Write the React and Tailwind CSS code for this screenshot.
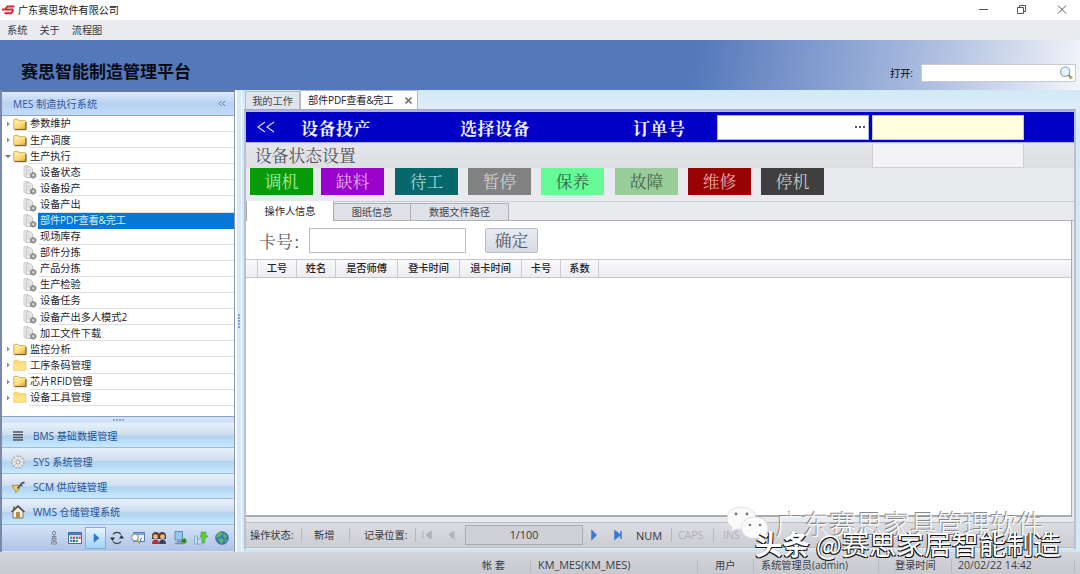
import React from "react";

const SANS = "font-['Open_Sans','Noto_Sans_CJK_SC',sans-serif]";
const SONG = "font-['Noto_Serif_CJK_SC','Noto_Sans_CJK_SC',serif]";

function Folder({ open }) {
  return (
    <svg width="14" height="13" viewBox="0 0 14 13" className="shrink-0">
      <defs>
        <linearGradient id="fold" x1="0" y1="0" x2="1" y2="1">
          <stop offset="0" stopColor="#fff3b4" />
          <stop offset=".55" stopColor="#fbdc7c" />
          <stop offset="1" stopColor="#dfa52e" />
        </linearGradient>
      </defs>
      <path d="M.8 11.2V2.2q0-.9.9-.9h3.2l1.2 1.4h5.9q.9 0 .9.9v7.6z" fill={open ? "url(#fold)" : "#ffdc78"} stroke={open ? "#c09a45" : "#ecc75f"} strokeWidth=".8" />
      {open ? <path d="M6 5.2 7.6 4h4.8" stroke="#f9e9a8" strokeWidth="1" fill="none" /> : <path d="M1.3 5h11v5.8h-11z" fill="#ffe488" />}
      {open && <path d="M13 4v7.7H1.8" stroke="#6b542a" strokeWidth="1" fill="none" />}
    </svg>
  );
}

function Doc() {
  return (
    <svg width="14" height="14" viewBox="0 0 14 14" className="shrink-0">
      <path d="M1 .8h4.5l1.5 1.5v9H1z" fill="#eee" stroke="#c4c4c4" strokeWidth=".8" />
      <path d="M3.3 1.8h4l2.2 2.2v8.5H3.3z" fill="#ececec" stroke="#b4b4b4" strokeWidth=".8" />
      <path d="M4.8 5h3.2M4.8 7h3M4.8 9h2" stroke="#c3c3c3" strokeWidth=".8" />
      <path d="m10.2 7.4 2.6 1.4v3l-2.6 1.5-2.6-1.5v-3z" fill="#9b9b9b" stroke="#777" strokeWidth=".8" />
      <circle cx="10.2" cy="10.3" r="1" fill="#e8e8e8" />
    </svg>
  );
}

const tree = [
  ["参数维护", 0, true], ["生产调度", 0, true], ["生产执行", 0, true, true],
  ["设备状态", 1], ["设备投产", 1], ["设备产出", 1], ["部件PDF查看&完工", 1, false, false, true],
  ["现场库存", 1], ["部件分拣", 1], ["产品分拣", 1], ["生产检验", 1], ["设备任务", 1],
  ["设备产出多人模式2", 1], ["加工文件下载", 1],
  ["监控分析", 0, true], ["工序条码管理", 0, false], ["芯片RFID管理", 0, true], ["设备工具管理", 0, false],
];

function TreeRow({ item }) {
  const [label, level, open, expanded, selected] = item;
  return (
    <div className="flex h-[16.1px] shrink-0 items-center">
      {level === 0 ? (
        <>
          <svg width="10" height="8" viewBox="0 0 10 8" className="shrink-0">
            {expanded ? <path d="M2 3h6L5 6z" fill="#777" /> : <path d="M4 1.5 6.6 4 4 6.5z" fill="#888" />}
          </svg>
          <Folder open={open} />
          <span className="ml-[2px] flex h-full flex-1 items-center whitespace-nowrap border-b border-[#dedfe1] pl-px text-[10.2px] text-[#25252d]">{label}</span>
        </>
      ) : (
        <>
          <span className="ml-[20px] flex"><Doc /></span>
          <span className={"ml-[1px] flex h-full flex-1 items-center whitespace-nowrap border-b pl-[2px] text-[10.2px] " + (selected ? "border-[#0877d4] bg-[#0877d4] tracking-[-0.15px] text-[#d6efff]" : "border-[#dedfe1] text-[#25252d]")}>{label}</span>
        </>
      )}
    </div>
  );
}

function NavIcon({ kind }) {
  return (
    <svg width="16" height="16" viewBox="0 0 16 16" className="shrink-0">
      {kind === 0 && <path d="M3 4h10M3 6.7h10M3 9.4h10M3 12h10" stroke="#51565e" strokeWidth="1.5" />}
      {kind === 1 && (
        <g fill="none" stroke="#a9a9a9">
          <circle cx="8" cy="8" r="6" fill="#eee" strokeDasharray="2.2 1" strokeWidth="1.2" />
          <circle cx="8" cy="8" r="2" />
          <path d="M8 2.5V6M8 10v3.5M2.5 8H6M10 8h3.5M4 4l2.5 2.5M9.5 9.5 12 12M12 4 9.5 6.5M6.5 9.5 4 12" strokeWidth=".7" />
        </g>
      )}
      {kind === 2 && (
        <g>
          <path d="M2 6.5 8.5 6l1 3.5L6 13.5l-1.5-3z" fill="#edcb72" stroke="#a77f35" strokeWidth=".8" />
          <path d="m7.5 9.5 4.5-5.5 2.5-.5M10.5 6l2 1" stroke="#565656" strokeWidth="1.8" fill="none" />
        </g>
      )}
      {kind === 3 && (
        <g>
          <path d="M3 7.4 8 3l5 4.4V14H3z" fill="#f3edda" stroke="#635c53" strokeWidth=".8" />
          <path d="M1.5 8 8 2l6.5 6" fill="none" stroke="#504b47" strokeWidth="1.5" />
          <path d="M6 8h4v6H6z" fill="#b58c4c" />
          <path d="M4 2.5v3" stroke="#635c53" strokeWidth="1.5" />
        </g>
      )}
    </svg>
  );
}

function ToolIcon({ kind }) {
  return (
    <svg width="16" height="16" viewBox="0 0 16 16">
      {kind === 0 && <g fill="#d5dbe7" stroke="#717c8e" strokeWidth=".9"><circle cx="8" cy="3" r="1.7" /><path d="M8 5v4M5.5 6.5h5" /><path d="M6 8.2h4v2H6zM5.5 12h5v2h-5zM8 10v2" /></g>}
      {kind === 1 && <g><path d="M1.5 2.5h13v11h-13z" fill="#fff" stroke="#426ba7" /><path d="M2 3h12v2.3H2z" fill="#4a7bbc" /><path d="M3 6.5h2.5V9H3zM9 9.7h2.2v2.4H9z" fill="#47a46a" /><path d="M6 6.5h2.3V9H6zM11.7 6.5h2V9h-2z" fill="#d34e55" /><path d="M9 6.5h2.2V9H9zM3 9.7h2.5v2.4H3z" fill="#547dd4" /><path d="M6 9.7h2.3v2.4H6z" fill="#594dae" /></g>}
      {kind === 2 && <path d="m6 3.8 5 4.2-5 4.2z" fill="#267bdb" stroke="#1b62b3" strokeWidth=".5" />}
      {kind === 3 && <g><path d="M4 4.3a5.2 5.2 0 0 1 8 0M12 11.7a5.2 5.2 0 0 1-8 0" fill="none" stroke="#36414b" strokeWidth="1.3" /><path d="M1 7.5h5L3.5 11zM10 8.5h5L12.500 5z" fill="#28323b" /></g>}
      {kind === 4 && <g><path d="M3.5 2.5h11v9h-11z" fill="#e8f3ff" stroke="#547db4" /><path d="M4 3h10v2H4z" fill="#7ca6d9" /><circle cx="5" cy="7.5" r="3.3" fill="#eff7ff" stroke="#999f9f" strokeWidth="1.2" /><path d="m7 10 3 3.5" stroke="#bda24d" strokeWidth="2" /><path d="m12 8-2 2 2 2" stroke="#4d80bd" fill="none" /></g>}
      {kind === 5 && <g><path d="M1 6q0-4 4-4 3 0 3 3 0-3 3-3 4 0 4 4v3H1z" fill="#5b3b29" /><circle cx="4.5" cy="6.7" r="2.4" fill="#eabb91" /><circle cx="11.5" cy="6.7" r="2.4" fill="#eabb91" /><path d="M1 14q0-4.500 3.500-4.500T8 14z" fill="#a9343f" /><path d="M8 14q0-4.500 3.500-4.500T15 14z" fill="#3b4164" /></g>}
      {kind === 6 && <g><path d="M3 1.500h7.500v8.500H3z" fill="#8fc8f2" stroke="#4c7ba3" strokeWidth=".8" /><path d="M5 11.500h5M3 13.500h8" stroke="#70899f" strokeWidth="1.500" /><circle cx="12" cy="11" r="2.800" fill="#50a54c" /><path d="M13 8.500v5L9.500 11z" fill="#267a2b" /></g>}
      {kind === 7 && <g><path d="M1.500 6h3v8h-3zM4.500 9h4v5h-4z" fill="#c5dcf3" stroke="#6d9ecb" strokeWidth=".7" /><path d="M8 2h5v4h2l-3.200 3.200V13H9.500V9.200L7 6h1z" fill="#64c83b" stroke="#48a334" strokeWidth=".6" /></g>}
      {kind === 8 && <g><circle cx="8" cy="8" r="6.300" fill="#347dc2" stroke="#245583" strokeWidth=".7" /><path d="m3 4 3-2 3 1-2 3-2 1-3 1zm7-1 3 3-2 3-2-3zM4 9l4-1 2 3-3 3zm7 1 3-1-3 4z" fill="#62b461" /></g>}
    </svg>
  );
}

const states = [
  ["调机", "bg-[#079c07] text-[#b5e9a7] ml-0"], ["缺料", "bg-[#9903cb] text-[#e3afed] ml-[8px]"],
  ["待工", "bg-[#06686a] text-[#a9dcdc] ml-[11px]"], ["暂停", "bg-[#828283] text-[#cfcfcf] ml-[10px]"],
  ["保养", "bg-[#65fc98] text-[#32684b] ml-[10px]"], ["故障", "bg-[#99cd9a] text-[#48664c] ml-[11px]"],
  ["维修", "bg-[#980203] text-[#eba8a8] ml-[10px]"], ["停机", "bg-[#3f3f40] text-[#c8c8c8] ml-[10px]"],
];

function Sep({ className }) {
  return <i className={"h-[14px] w-px shrink-0 bg-[#b6b9c0] " + className} />;
}

function Sidebar() {
  return (
    <aside className="flex w-[235px] shrink-0 flex-col border-l-2 border-[#7989aa] border-r border-r-[#8598bc] bg-[#d4e4f7]">
      <div className="h-[2px] shrink-0 bg-[#6679a2]" />
      <div className="flex h-[23px] shrink-0 items-center justify-between bg-linear-to-b from-[#dceafe] via-[#b8d1f2] to-[#c3dcf8] pl-[11px] pr-[8px] pt-px text-[10.2px] text-[#2f58a3]">
        <span>MES 制造执行系统</span>
        <svg width="8" height="8" viewBox="0 0 8 8" fill="none" stroke="#5577b9"><path d="M3.500 1 1 3.500 3.500 6M7 1 4.500 3.500 7 6" /></svg>
      </div>
      <div className="flex h-[302px] shrink-0 flex-col border-y border-[#8ba2c7] bg-white pl-[1px]">
        {tree.map((item) => <TreeRow key={item[0]} item={item} />)}
      </div>
      <div className="flex h-[6px] shrink-0 items-center justify-center gap-[1px] bg-[#d1e3f8]">
        {[0, 1, 2, 3].map((n) => <i key={n} className="size-[2px] bg-[#91a9cd]" />)}
      </div>
      {["BMS 基础数据管理", "SYS 系统管理", "SCM 供应链管理", "WMS 仓储管理系统"].map((label, i) => (
        <div key={label} className="flex h-[25.4px] shrink-0 items-center border-b border-[#9ebad8] bg-[linear-gradient(180deg,#e8f1fc_0%,#cfdeef_48%,#b2d3ef_56%,#c6eaff_100%)] pl-[8px] pt-[2px] text-[10.1px] text-[#24519a]">
          <NavIcon kind={i} /><span className="ml-[7px] whitespace-nowrap">{label}</span>
        </div>
      ))}
      <div className="flex h-[26px] shrink-0 items-center bg-linear-to-b from-[#d4e3f7] to-[#aec3e5] pl-[41px]">
        {[0, 1, 2, 3, 4, 5, 6, 7, 8].map((k) => (
          <span key={k} className={"flex h-[22px] w-[21.1px] shrink-0 items-center justify-center " + (k === 2 ? "border border-[#84abd9] bg-linear-to-b from-[#e6f3ff] to-[#a1d1fa]" : "")}><ToolIcon kind={k} /></span>
        ))}
      </div>
    </aside>
  );
}

function Workspace() {
  return (
    <section className="flex min-w-0 flex-1 flex-col bg-[linear-gradient(180deg,#cfeaf5_0px,#e2edf7_20px,#d4e8f6_40px)] pl-[2px] pr-[4px]">
      <div className="flex h-[20px] shrink-0 items-end border-b border-[#a1a8bd] pl-px text-[10.2px] text-[#444952]">
        <span className="flex h-[18px] w-[55px] items-center justify-center border border-b-0 border-[#b3bac8] bg-[#dfe4ed] pt-px">我的工作</span>
        <span className="flex h-[19px] w-[118px] items-center whitespace-nowrap border border-b-0 border-[#b3bac8] bg-white pl-[7px] pt-px tracking-[-0.2px] text-[#22242d]">部件PDF查看&amp;完工
          <svg width="9" height="9" viewBox="0 0 9 9" className="ml-auto mr-[4px]"><path d="m1.5 1.5 6 6m0-6-6 6" stroke="#666" strokeWidth="1.5" /></svg>
        </span>
      </div>
      <div className="flex min-h-0 flex-1 flex-col border-x-2 border-[#bac0d0] bg-[#e9eaee]">
        <div className={"flex h-[33px] shrink-0 items-center border-b border-t-2 border-b-[#aeb1ec] border-t-[#b0b4dc] bg-[#0000c7] text-[17px] font-bold text-[#f0f2ff] " + SONG}>
          <svg width="20" height="14" viewBox="0 0 20 14" className="ml-[10px]"><path d="M9 2 2 7l7 5m9-10-7 5 7 5" stroke="#dce0ff" strokeWidth="1.2" fill="none" /></svg>
          <span className="ml-[25px] w-[159px] whitespace-nowrap tracking-[.5px]">设备投产</span>
          <span className="w-[173px] whitespace-nowrap tracking-[.5px]">选择设备</span>
          <span className="w-[84px] whitespace-nowrap tracking-[.5px]">订单号</span>
          <span className="flex h-[25px] w-[152px] items-center justify-end gap-[2px] border border-[#aeb1db] bg-white pr-[3px]">
            {[0, 1, 2].map((n) => <i key={n} className="size-[2px] bg-[#555]" />)}
          </span>
          <span className="ml-[3px] h-[25px] w-[152px] border border-[#c9caa8] bg-[#ffffdf]" />
        </div>
        <div className="flex h-[25px] shrink-0 items-center justify-between bg-linear-to-b from-[#e5e6ea] to-[#dedfe2] pl-[9px] pr-[50px]">
          <span className={"text-[16.8px] leading-none text-[#4e5159] " + SONG}>设备状态设置</span>
          <span className="h-[24px] w-[152px] border border-t-0 border-[#cfd0d5] bg-[#f3f3f7]" />
        </div>
        <div className={"flex h-[27px] shrink-0 pl-[4px] " + SONG}>
          {states.map(([label, style]) => <span key={label} className={"flex w-[63px] items-center justify-center text-[16.8px] " + style}>{label}</span>)}
        </div>
        <div className="mt-[6px] flex h-[20px] shrink-0 items-end border-t border-[#cbcdd2] text-[10.2px] text-[#43464e]">
          <span className="flex h-[20px] w-[88px] items-center justify-center border-x border-[#a9acb4] bg-white text-[#22242d]">操作人信息</span>
          <span className="flex h-[18px] w-[77px] items-center justify-center border border-l-0 border-[#aeb1b9] bg-[#dfe1e6]">图纸信息</span>
          <span className="flex h-[18px] w-[98px] items-center justify-center border border-l-0 border-[#aeb1b9] bg-[#dfe1e6]">数据文件路径</span>
          <i className="h-px flex-1 bg-[#aeb1b9]" />
        </div>
        <div className="mr-[2px] flex h-[296px] shrink-0 flex-col border-b-2 border-r border-[#a8abb1] bg-white">
          <div className={"flex h-[38px] shrink-0 items-center pl-[13px] text-[17px] text-[#575b65] " + SONG}>
            <span className="w-[50px] whitespace-nowrap">卡号<span className="ml-[1px]">:</span></span>
            <span className="h-[25px] w-[157px] border border-[#bdbfc6] bg-white" />
            <span className="ml-[19px] flex h-[25px] w-[53px] items-center justify-center rounded-xs border border-[#b5bbc8] bg-linear-to-b from-[#e9ebf3] to-[#d7dbe6] text-[16.8px]">确定</span>
          </div>
          <div className="flex h-[19px] shrink-0 border-y border-[#c5c7cc] bg-linear-to-b from-[#f9f9fb] to-[#ededf1] text-[10.2px] font-medium text-[#202229]">
            <span className="w-[12px] border-r border-[#c9cbd0]" />
            <span className="flex w-[39px] items-center justify-center border-r border-[#c9cbd0]">工号</span>
            <span className="flex w-[39px] items-center justify-center border-r border-[#c9cbd0]">姓名</span>
            <span className="flex w-[62px] items-center justify-center border-r border-[#c9cbd0]">是否师傅</span>
            <span className="flex w-[62px] items-center justify-center border-r border-[#c9cbd0]">登卡时间</span>
            <span className="flex w-[62px] items-center justify-center border-r border-[#c9cbd0]">退卡时间</span>
            <span className="flex w-[39px] items-center justify-center border-r border-[#c9cbd0]">卡号</span>
            <span className="flex w-[38px] items-center justify-center border-r border-[#c9cbd0]">系数</span>
          </div>
        </div>
        <div className="mt-[5px] flex h-[26px] shrink-0 items-center border-b border-t border-[#b9bbc1] bg-linear-to-b from-[#dcdde2] to-[#cbcdd3] pl-[4px] text-[10.2px] text-[#34363d]">
          <span className="w-[51px] whitespace-nowrap">操作状态:</span><Sep className="" />
          <span className="ml-[12px] w-[35px]">新增</span><Sep className="" />
          <span className="ml-[14px] w-[51px] whitespace-nowrap">记录位置:</span><Sep className="" />
          <svg width="49" height="12" viewBox="0 0 49 12" className="shrink-0"><path d="M7 2v8M15 2v8M15 2l-5 4 5 4zM38 2l-5 4 5 4z" fill="#aeb2b9" stroke="#aeb2b9" /></svg>
          <span className="flex h-[20px] w-[118px] items-center justify-center border border-[#a8abb2] bg-[#cfd1d6] text-[10.800px]">1/100</span>
          <svg width="53" height="12" viewBox="0 0 53 12" className="shrink-0"><path d="m9 2 4 4-4 4zM32 2l5 4-5 4zM38 2v8" fill="#3979da" stroke="#3979da" strokeWidth="1.5" /></svg>
          <span className="w-[35px] text-[11px] font-medium">NUM</span><Sep className="" />
          <span className="ml-[6px] w-[35px] text-[10.5px] text-[#aeb1b8]">CAPS</span><Sep className="" />
          <span className="ml-[9px] text-[10.5px] text-[#aeb1b8]">INS</span>
        </div>
      </div>
      <div className="h-[3px] bg-[#cfe3f1]" />
    </section>
  );
}

function Watermark() {
  return (
    <div className="pointer-events-none absolute inset-0 z-20">
      <svg width="46" height="38" viewBox="0 0 46 38" className="absolute left-[725px] top-[505px]">
        <g fill="#fbfbfb" stroke="#c9c9c9" strokeWidth=".6">
          <path d="M16 2C8 2 2 7 2 13c0 5 2 7 5 9l-1 5 5-3c11 2 20-3 20-10C31 7 25 2 16 2z" />
          <path d="M30 12c-8 0-14 5-14 11s7 12 17 10l5 3-1-4c3-2 6-5 6-9 0-6-5-11-13-11z" />
        </g>
        <g fill="#777"><circle cx="11" cy="9" r="1.400" /><circle cx="22" cy="9" r="1.400" /><circle cx="25" cy="20" r="1.300" /><circle cx="35" cy="20" r="1.300" /></g>
      </svg>
      <span className="absolute left-[776px] top-[511px] whitespace-nowrap text-[26.800px] font-light leading-[28px] text-[#fafafa] [text-shadow:-1px_-1px_0_#888]">广东赛思家具管理软件</span>
      <span className="absolute left-[755px] top-[529px] whitespace-nowrap text-[27.400px] leading-[28px] text-white [text-shadow:-1px_1px_0_#111,1px_1px_0_#111]"><b>头条</b><span className="ml-[6px] font-['Noto_Sans_CJK_SC',sans-serif]">@</span>赛思家居智能制造</span>
    </div>
  );
}

export default function App() {
  return (
    <main className={"relative flex h-[574px] w-[1080px] flex-col overflow-hidden bg-[#d4e8f6] leading-none " + SANS}>
      <header className="flex h-[20px] shrink-0 items-center bg-white text-[10.1px] text-[#202020]">
        <svg width="14" height="10" viewBox="0 0 14 10" className="ml-px"><path d="M6 1.500h7.500M1 4.500h11M3.500 8.200h7.500" stroke="#d92435" strokeWidth="2" /><path d="M6 1.500 4.500 4.500M12 4.500l-1 3.500" stroke="#d92435" strokeWidth="2" /></svg>
        <span className="ml-[3px]">广东赛思软件有限公司</span>
        <svg width="94" height="16" viewBox="0 0 94 16" className="ml-auto mr-[12px]" fill="none" stroke="#555"><path d="M5 7.500h9M43.500 5.500h6v6h-6zM45.500 5.500v-2h6v6h-2M84 3.500l8 8M92 3.500l-8 8" /></svg>
      </header>
      <nav className="flex h-[20px] shrink-0 items-center gap-[12px] bg-[#e9ebee] pl-[7px] text-[10.2px] text-[#353845]"><span>系统</span><span>关于</span><span>流程图</span></nav>
      <div className="flex h-[50px] shrink-0 items-center justify-between bg-[linear-gradient(100deg,#5578ba_0%,#5578ba_64%,#8ca4d3_78%,#adbee0_86%,#d4dcee_94%,#f3f5fb_100%)] pl-[21px] pr-[4px]">
        <h1 className="mt-[13px] text-[17px] font-bold text-[#070b14]">赛思智能制造管理平台</h1>
        <div className="mt-[16px] flex items-center text-[10.2px] font-medium text-[#20283a]">
          <span className="w-[31px] whitespace-nowrap">打开:</span>
          <span className="flex h-[18px] w-[155px] items-center justify-end border border-[#c5cbd5] bg-white pr-[2px]">
            <svg width="14" height="14" viewBox="0 0 14 14"><circle cx="6.200" cy="5.700" r="4.600" fill="#e5f3ff" stroke="#9aaab8" strokeWidth="1.300" /><path d="m9.500 9 1.500 1.500" stroke="#777" strokeWidth="2" /><circle cx="11.800" cy="11.500" r="1.800" fill="#c6a45f" /></svg>
          </span>
        </div>
      </div>
      <div className="flex h-[462px] shrink-0">
        <Sidebar />
        <div className="flex w-[7px] shrink-0 flex-col items-center justify-center gap-[1px] border-x border-l-2 border-white bg-[#d6e8f9]">{[0, 1, 2, 3, 4].map((n) => <i key={n} className="size-[2px] bg-[#83a5d2]" />)}</div>
        <Workspace />
      </div>
      <footer className="flex h-[22px] shrink-0 items-center bg-linear-to-b from-[#d5d6db] to-[#c7c9cf] pt-[5px] text-[10.2px] text-[#3b3d45]">
        <span className="ml-[482px] w-[48px]">帐 套</span><Sep className="" />
        <span className="ml-[7px] w-[159px] whitespace-nowrap text-[10.9px]">KM_MES(KM_MES)</span><Sep className="" />
        <span className="ml-[17px] w-[38px]">用户</span><Sep className="" />
        <span className="ml-[7px] w-[117px] whitespace-nowrap">系统管理员(admin)</span><Sep className="" />
        <span className="ml-[16px] w-[56px] whitespace-nowrap">登录时间</span><Sep className="" />
        <span className="ml-[6px] w-[116px] whitespace-nowrap text-[10.6px]">20/02/22 14:42</span><Sep className="" />
      </footer>
      <Watermark />
    </main>
  );
}
